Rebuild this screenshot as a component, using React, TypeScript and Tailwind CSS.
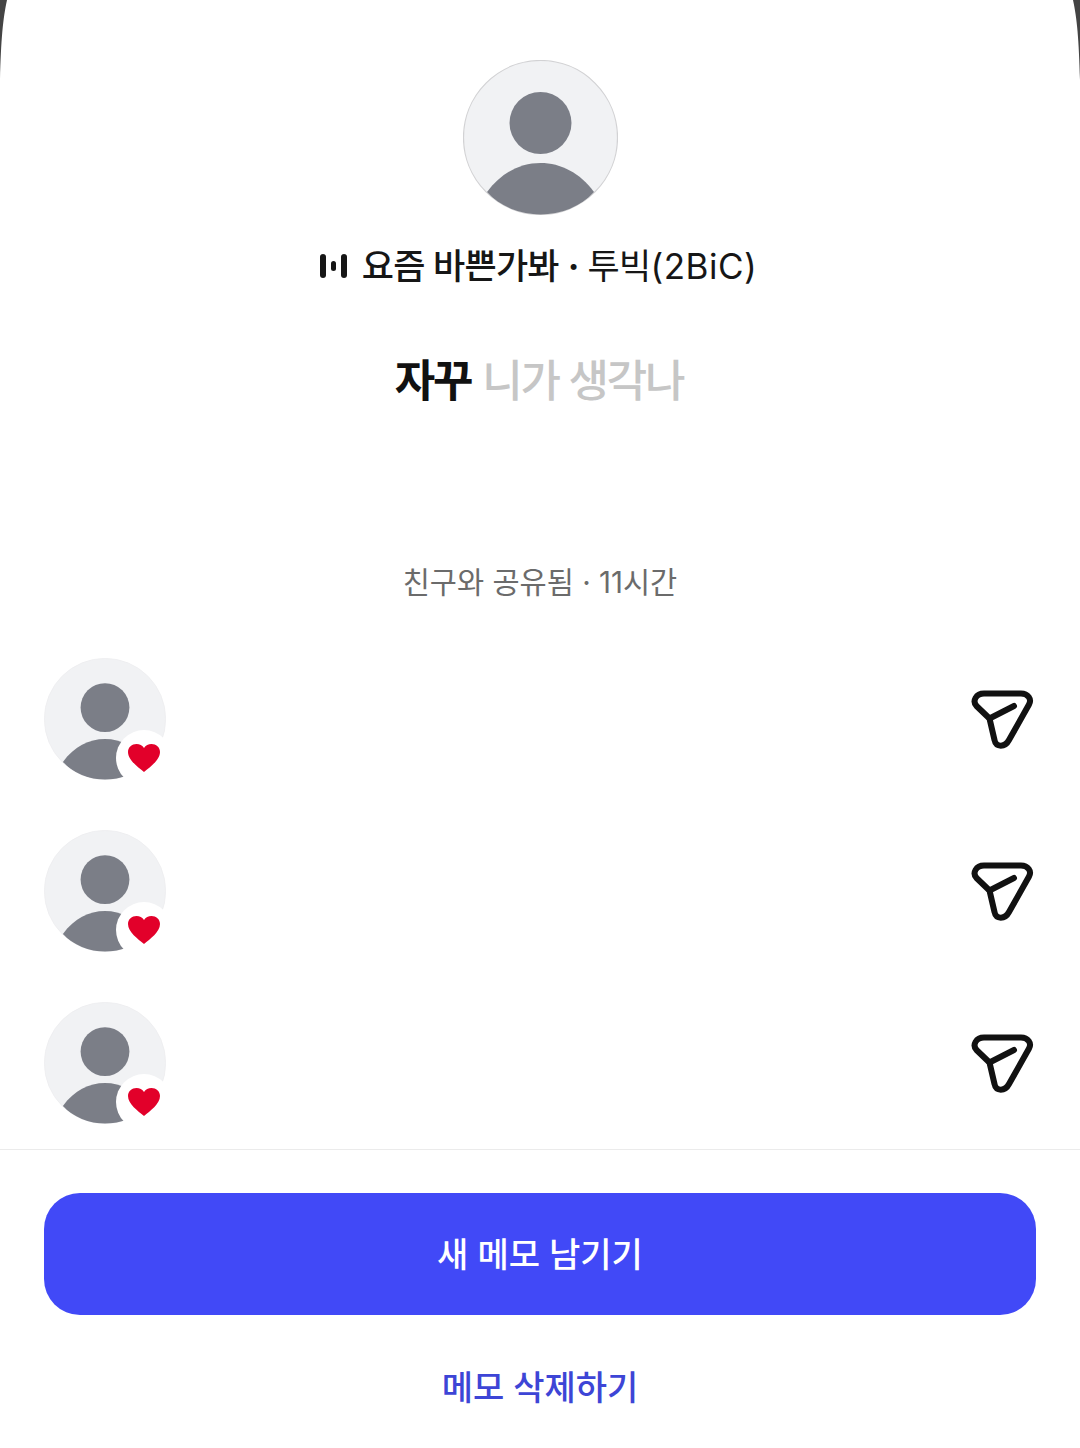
const font = { fontFamily: 'Inter, "Noto Sans CJK KR", sans-serif' };

function Avatar({ className, ring }: { className: string; ring: string }) {
  return (
    <svg viewBox="0 0 155 155" className={className}>
      <defs>
        <clipPath id="avatar-clip">
          <circle cx="77.5" cy="77.5" r="77" />
        </clipPath>
      </defs>
      <circle cx="77.5" cy="77.5" r="77" fill="#f1f2f4" stroke={ring} strokeWidth="1.2" />
      <circle cx="77.5" cy="63" r="31" fill="#7b7e87" />
      <g clipPath="url(#avatar-clip)">
        <path d="M24 132 C38 113 57 103 77.5 103 C98 103 117 113 131 132 C117 148 98 155 77.5 155 C57 155 38 148 24 132 Z" fill="#7b7e87" />
      </g>
    </svg>
  );
}

function SendIcon() {
  return (
    <svg viewBox="0 0 64 60" className="h-[60px] w-[64px]" fill="none" stroke="#111" strokeWidth="6" strokeLinecap="round" strokeLinejoin="round">
      <path d="M13 3.5 H50 C57 3.5 61 9 58 14.5 L38 50 C34 57.500 25 57.500 23.500 50 L18.500 28.500 L5.500 16 C1 11 5 3.500 13 3.500 Z" />
      <path d="M18.500 28.500 L43 16" />
    </svg>
  );
}

function LikedRow() {
  return (
    <div className="flex h-[172px] items-start justify-between pl-11 pr-[45px]">
      <div className="relative h-[122px] w-[122px]">
        <Avatar className="h-[122px] w-[122px]" ring="#eeeef0" />
        <div className="absolute left-[72px] top-[72px] flex h-[56px] w-[56px] items-center justify-center rounded-full bg-white">
          <svg viewBox="0 0 34 30" className="h-[30px] w-[34px]">
            <path d="M17 29 C11 24 1 17 1 9 C1 4 5 1 9.500 1 C12.500 1 15.500 2.500 17 5 C18.500 2.500 21.500 1 24.500 1 C29 1 33 4 33 9 C33 17 23 24 17 29 Z" fill="#e2002a" />
          </svg>
        </div>
      </div>
      <div className="mt-[32px]">
        <SendIcon />
      </div>
    </div>
  );
}

export default function App() {
  return (
    <div className="relative h-[1448px] w-[1080px] overflow-hidden bg-white" style={font}>
      <svg viewBox="0 0 8 80" className="absolute left-0 top-0 h-[80px] w-[8px]">
        <path d="M0 0 H7 C3 18 1 40 0 80 Z" fill="#444" />
      </svg>
      <svg viewBox="0 0 8 80" className="absolute right-0 top-0 h-[80px] w-[8px]">
        <path d="M8 0 H1 C5 18 7 40 8 80 Z" fill="#444" />
      </svg>

      <div className="flex flex-col items-center pt-[60px]">
        <Avatar className="h-[155px] w-[155px]" ring="#d2d2d4" />
        <div className="mt-[29px] flex h-[44px] items-center pr-[3px] text-[35px] tracking-[-0.8px] text-[#161616]">
          <svg viewBox="0 0 27 24" className="mr-[15px] h-[24px] w-[27px]" fill="#161616">
            <rect x="0" y="0" width="6" height="24" rx="3" />
            <rect x="11" y="7" width="5" height="10" rx="2.500" />
            <rect x="21" y="0" width="6" height="24" rx="3" />
          </svg>
          <span className="font-medium">요즘 바쁜가봐</span>
          <span className="mx-[9px] font-bold">·</span>
          <span>투빅<span className="tracking-[0.5px]">(2BiC)</span></span>
        </div>
        <div className="mt-[63px] flex h-[60px] items-center pr-[2px] text-[44px] tracking-[-2.2px]">
          <span className="font-bold text-[#111]">자꾸</span>
          <span className="ml-[11px] font-medium text-[#c6c6c6]">니가 생각나</span>
        </div>
        <div className="mt-[151px] flex h-[40px] items-center text-[29.5px] text-[#6b6b6b]">
          친구와 공유됨 · 11시간
        </div>
      </div>

      <div className="mt-[56px]">
        <LikedRow />
        <LikedRow />
        <LikedRow />
      </div>

      <div className="-mt-[25px] border-t border-[#ebebeb] px-11 pt-[43px]">
        <button type="button" className="flex h-[122px] w-[992px] items-center justify-center rounded-[36px] bg-[#4149f7] text-[34px] font-medium text-white">
          새 메모 남기기
        </button>
        <div className="mt-[49px] flex h-[46px] items-center justify-center text-[34px] font-medium text-[#3d45d6]">
          메모 삭제하기
        </div>
      </div>
    </div>
  );
}
